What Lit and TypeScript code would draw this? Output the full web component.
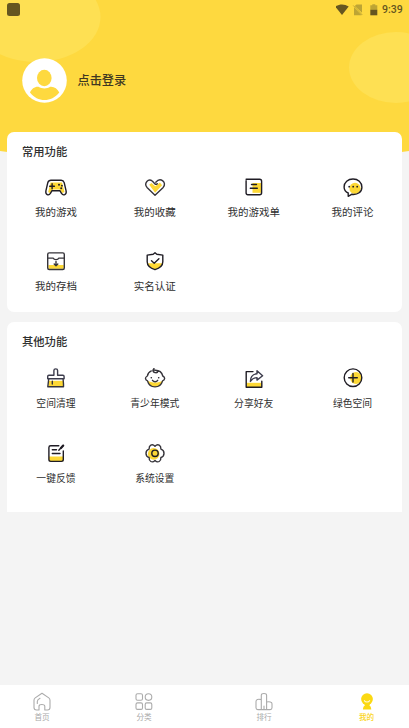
import { LitElement, html, svg, css, type SVGTemplateResult } from "lit";
import { customElement, property } from "lit/decorators.js";

const icons: Record<string, SVGTemplateResult> = {
  game: svg`<path class="fill" d="M6.500 7.500h11.500l2.500 9.500-2 1-3-3.600H8.700l-3 3.600-1.500-1z"/><path d="M7 5.300h10.200c1.500 0 2.500.8 3 2.300l1.900 8.200c.8 3.900-2.900 5.300-4.600 2.600l-1.600-2.700H8l-1.600 2.700C4.700 21.100 1.200 19.700 1.900 15.800l1.900-8.200c.5-1.500 1.600-2.300 3.200-2.300z"/><path d="M8.100 8.800v5M5.700 11.300h4.700"/><g class="dot"><circle cx="15" cy="9.800" r="1"/><circle cx="17.900" cy="10.700" r=".9"/><circle cx="17.200" cy="13.200" r="1"/></g>`,
  heart: svg`<path class="fill" d="M6.200 9.800l2.200-1.900 3.800 3.300 4.700-3.600 2.200 2.600-7 7.500z"/><path class="soft" d="M12 20.300L4 12.400C.6 8.200 5.200 2.900 9.500 6.200l2.500 2.700c.8.7 1.600.5 2.300-.2M12.800 7.200c4.700-5.400 11.500.2 7.400 5.200L12 20.300"/>`,
  list: svg`<path class="fill" d="M10.500 8h8.900v9.800h-8.900z"/><path d="M4.100 4.200h13.500a2 2 0 0 1 2 2v11.600a2 2 0 0 1-2 2H5.800a1.700 1.700 0 0 1-1.700-1.700V5.800M9.500 9.500h5M8.300 13.200h7"/>`,
  comment: svg`<circle class="fill" cx="14" cy="13.400" r="5.600"/><path d="M7.200 18v3.300l3.400-2c6.400.8 10.300-2.500 10.300-7.100 0-4.900-3.900-8.200-8.900-8.200s-8.900 3.300-8.900 7.900c0 2.700 1.400 4.800 4.100 6.100z"/><g class="dot"><circle cx="8.200" cy="11.700" r=".9"/><circle cx="12.200" cy="11.700" r=".9"/><circle cx="16.200" cy="11.700" r=".9"/></g>`,
  archive: svg`<path class="fill" d="M4.500 16h15.200v3.800H4.500z"/><rect class="soft" x="3.700" y="3.900" width="16.600" height="16.600" rx="1.500"/><path class="soft" d="M4 9.100h5.300c.6 2 4.800 2 5.400 0H20M12 12.500v4.300M10.200 15l1.800 1.800 1.800-1.800"/>`,
  shield: svg`<path class="fill" d="M4.800 14.200h14.600c-1 3.200-4 5.300-7.300 6.200-3.700-1-6.300-3-7.300-6.200z"/><path d="M12 3.800l1.800 1.500 6 .8v6.700c0 4-3.500 6.600-7.800 7.900-4.300-1.300-7.800-3.900-7.800-7.900V6.100l6-.8zM8.500 11.800l2.700 2.500 4.700-4.500"/>`,
  brush: svg`<path class="fill" d="M4.500 14.800h15v6h-15z"/><path class="soft" d="M4.700 13l-.9 7.800h15.700V18l-.4-5M8.300 15.300v2.700"/><path class="slate" d="M3.700 12.700V10.400c0-.9.300-1.200 1.200-1.200h5V4.400c0-2 3.700-2 3.700 0v4.800h5.300c.9 0 1.200.3 1.200 1.200v2.300z"/>`,
  baby: svg`<path class="fill" d="M4.300 14.500c5 2.800 10.800 2.800 15.600 0-1.300 4.100-4 6.300-7.900 6.300s-6.600-2.200-7.700-6.300z"/><path class="soft" d="M8.300 4.900C6.100 5.800 4.800 7.500 4.300 10c-2.500 1.300-2.400 3.900.2 4.900 1 3.900 3.800 6 7.500 6s6.500-2.100 7.600-6c2.600-1 2.800-3.600.2-4.900-.9-3.600-3.700-5.700-7.500-5.700-1.800 0-2.300-1.100-1.200-1.600M9.900 4c0 2.900 4.500 3.700 5.100 1M9.500 14.300c1.300 1.900 3.900 1.900 5.200 0"/><g class="dot"><circle cx="8.300" cy="11.700" r=".8"/><circle cx="15.700" cy="11.700" r=".8"/></g>`,
  share: svg`<path class="fill" d="M4.500 16.800h15.200v4.500H4.500z"/><path d="M11 5.600H4.200v15.700h15.600v-6"/><path class="slate" d="M15 4.800l5.600 4.900-5.600 4.400v-2.500c-3 0-4.900 1.300-6.600 3.800 0-4.300 2.600-7.200 6.600-7.700z"/>`,
  plus: svg`<circle class="fill" cx="15" cy="12" r="5.900"/><circle cx="12" cy="11.700" r="8.800"/><path d="M12 7.500v8.600M7.700 11.800h8.600"/>`,
  note: svg`<path class="fill" d="M5 15.500h14.300v4.700H5z"/><path d="M14.800 4.700H6.700c-1.200 0-1.800.6-1.800 1.700v12.200c0 1.200.6 1.800 1.800 1.800h10.800c1.200 0 1.800-.6 1.800-1.800V10M8.300 8.700h4.200M8.300 12.500h7.700M19.200 4.500l-4.400 4.800"/><path class="bold" d="M19.200 4.600L17 7"/>`,
  gear: svg`<circle class="fill" cx="10.700" cy="12.900" r="5.800"/><path class="soft" d="M12 5.200C13.500 3.600 14.700 3.300 16.200 4.100C17.700 4.900 18 6 17.900 8.100C20.300 8.700 21 10 21 12.300C21 14.600 20.300 15.900 17.900 16.500C18 18.600 17.700 19.700 16.200 20.500C14.700 21.300 13.500 21 12 19.400C10.500 21 9.300 21.300 7.800 20.500C6.300 19.700 6 18.600 6.100 16.500C3.700 15.900 3 14.600 3 12.300C3 10 3.700 8.700 6.100 8.100C6 6 6.300 4.900 7.800 4.100C9.300 3.300 10.500 3.600 12 5.200z"/><circle cx="12" cy="12.300" r="3.200"/>`,
};

const navIcons: Record<string, SVGTemplateResult> = {
  home: svg`<path d="M10 1.300L3.200 5.900C2.200 6.600 2 7.200 2 8.300v7.200C2 17.300 2.800 18 4.500 18H7v-3.800c0-2.200 5.800-2.200 5.800 0V18h2.700c1.700 0 2.500-.7 2.500-2.500V8.300c0-1.100-.2-1.700-1.200-2.400zM5.300 11.500V9.400c0-1.300 1.300-2.500 2.700-3.200"/>`,
  kinds: svg`<rect x="2" y="1.800" width="6.500" height="6.500" rx="1.500"/><circle cx="14.500" cy="5.100" r="3.300"/><rect x="2" y="10.900" width="6.500" height="6.500" rx="1.500"/><rect x="11.200" y="10.900" width="6.600" height="6.500" rx="1.500"/>`,
  rank: svg`<path d="M7.300 17.600V3.200c0-2.300 5.300-2.300 5.300 0v14.400M7.300 7.600C4 6.700 2 7.600 2 9.400v6.400c0 1.200.7 1.800 1.800 1.800h12.300c1.200 0 1.900-.6 1.900-1.800v-4.100c0-1.800-2.700-2.200-5.400-1.700M10 14v3.500"/>`,
  me: svg`<circle class="solid" cx="10" cy="7.100" r="5.900"/><path class="solid" d="M7.300 12h5.700l-.6 1.500c1 .5 1.700 1.700 1.900 3.900H5.900c.2-2.200.9-3.400 2-3.900z"/><path class="smile" d="M7.400 8.700c1.100 1.700 4.100 1.700 5.200 0"/>`,
};

@customElement("menu-tile")
class MenuTile extends LitElement {
  @property() icon = "";
  @property() label = "";
  static styles = css`
    :host { display: flex; flex-direction: column; align-items: center; color: #303030; }
    svg { width: 24px; height: 24px; display: block; fill: none; stroke: #1f1c24; stroke-width: 1.400; stroke-linecap: round; stroke-linejoin: round; }
    .fill { fill: #fdd835; stroke: none; }
    .soft { stroke: #36343a; }
    .slate { stroke: #3c3c4c; fill: #fff; }
    .bold { stroke-width: 2.200; }
    .dot { fill: #1f1c24; stroke: none; }
    .label { margin-top: 5px; line-height: 16px; white-space: nowrap; }
  `;
  render() {
    return html`<svg viewBox="0 0 24 24">${icons[this.icon]}</svg><div class="label">${this.label}</div>`;
  }
}

@customElement("app-root")
class AppRoot extends LitElement {
  static styles = css`
    :host {
      position: relative; display: flex; flex-direction: column; height: 728px; overflow: hidden;
      background: #f4f4f4; font-family: "Noto Sans CJK SC", sans-serif; color: #303030;
    }
    .backdrop { position: absolute; left: 0; top: 0; width: 409px; height: 170px; }
    .status { position: relative; height: 19px; display: flex; align-items: center; padding: 0 6px 0 7px; }
    .app { width: 13px; height: 13px; border-radius: 2.500px; background: #655620; }
    .signals { width: 46px; height: 14px; margin-left: auto; }
    .time { font: 500 10.500px/19px Roboto, sans-serif; color: #655620; width: 21px; white-space: nowrap; }
    .profile { position: relative; display: flex; align-items: center; gap: 10.500px; height: 45px; margin: 38.500px 0 29px 22px; }
    .avatar { width: 45px; height: 45px; display: block; }
    .login { font-size: 12.200px; line-height: 18px; font-weight: 500; color: #3f3821; }
    .card { position: relative; margin: 0 7px; background: #fff; border-radius: 7px; }
    .common { height: 180.500px; font-size: 10.500px; }
    .other { height: 190px; margin-top: 9.500px; border-radius: 7px 7px 0 0; font-size: 9.800px; }
    h2 { margin: 0; padding: 10px 0 0 15px; height: 18px; font-size: 11.300px; line-height: 18px; font-weight: 500; }
    .tiles { display: grid; grid-template-columns: repeat(4, 1fr); margin-left: -.5px; }
    .common .tiles { grid-auto-rows: 74px; padding-top: 15.500px; }
    .other .tiles { grid-auto-rows: 75.500px; padding-top: 16px; }
    nav { margin-top: auto; height: 43px; background: #fff; display: grid; grid-template-columns: 84px 120px 120px 85px; }
    .tab { display: flex; flex-direction: column; align-items: center; padding-top: 7px; font-size: 7.600px; line-height: 10px; color: #aaa; }
    .tab svg { width: 20px; height: 20px; fill: none; stroke: #ababab; stroke-width: 1.100; stroke-linejoin: round; stroke-linecap: round; }
    .tab.on { color: #fbd51c; font-weight: 500; }
    .tab .solid { fill: #fbd913; stroke: none; }
    .tab .smile { stroke: #fffbe0; }
  `;

  private tiles(list: string[][]) {
    return html`<div class="tiles">${list.map(([i, t]) => html`<menu-tile .icon=${i} .label=${t}></menu-tile>`)}</div>`;
  }

  render() {
    return html`
      <svg class="backdrop" viewBox="0 0 409 170">
        <path fill="#fed93f" d="M0 0H409V151Q204 182 0 151Z"/>
        <ellipse cx="36" cy="17" rx="64.500" ry="45" fill="#fee053"/>
        <ellipse cx="396" cy="67.500" rx="47" ry="35.500" fill="#fee053"/>
      </svg>
      <div class="status">
        <div class="app"></div>
        <svg class="signals" viewBox="0 0 46 14">
          <path fill="#655620" d="M-.7 3.500C3.500 .8 8.500 .8 12.700 3.500L6 12z"/>
          <path fill="#bda434" d="M20.500 1.500H26v8.200L18.700 2.900zM18 4.300l7.600 7.900H18z"/>
          <path stroke="#bda434" d="M17.300 2.500l9 9.500"/>
          <path fill="#bda434" d="M34.300 2.300h2V1.300h3v1h2V7h-7z"/>
          <path fill="#655620" d="M34.300 6.800h7v5.500h-7z"/>
        </svg>
        <div class="time">9:39</div>
      </div>
      <div class="profile">
        <svg class="avatar" viewBox="0 0 45 45">
          <circle cx="22.500" cy="22.500" r="22.300" fill="#fff"/>
          <ellipse cx="22.300" cy="20" rx="7.300" ry="8.200" fill="#fed93f"/>
          <path fill="#fed93f" d="M8 34.500C9.500 30.500 13 28.300 16.500 28.700C20 31 25 31 28.200 28.700C32 28.300 35.500 30.500 37.300 34.500C29.500 44.500 15.500 44.500 8 34.500Z"/>
        </svg>
        <div class="login">点击登录</div>
      </div>
      <section class="card common">
        <h2>常用功能</h2>
        ${this.tiles([["game", "我的游戏"], ["heart", "我的收藏"], ["list", "我的游戏单"], ["comment", "我的评论"], ["archive", "我的存档"], ["shield", "实名认证"]])}
      </section>
      <section class="card other">
        <h2>其他功能</h2>
        ${this.tiles([["brush", "空间清理"], ["baby", "青少年模式"], ["share", "分享好友"], ["plus", "绿色空间"], ["note", "一键反馈"], ["gear", "系统设置"]])}
      </section>
      <nav>
        ${[["home", "首页"], ["kinds", "分类"], ["rank", "排行"], ["me", "我的"]].map(
          ([i, t]) => html`<div class="tab ${i === "me" ? "on" : ""}"><svg viewBox="0 0 20 20">${navIcons[i]}</svg><span>${t}</span></div>`
        )}
      </nav>
    `;
  }
}
